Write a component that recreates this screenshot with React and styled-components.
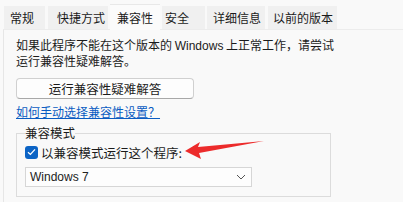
import React from 'react';
import styled, { createGlobalStyle } from 'styled-components';

const GlobalStyle = createGlobalStyle`
  html, body {
    margin: 0;
    padding: 0;
    background: #f9f9f9;
  }
  body {
    font-family: "Noto Sans CJK SC", "Noto Sans", sans-serif;
    font-size: 12px;
    color: #1b1b1b;
  }
`;

const Window = styled.div`
  width: 403px;
  height: 202px;
  overflow: hidden;
  position: relative;
  background: #f9f9f9;
`;

const TabStrip = styled.div`
  display: flex;
  align-items: flex-end;
  height: 29px;
  padding-left: 4px;
`;

const Tab = styled.div`
  width: ${p => p.w}px;
  margin-right: ${p => p.gap}px;
  height: ${p => (p.active ? '26px' : '23px')};
  padding-left: ${p => p.pad}px;
  display: flex;
  align-items: center;
  background: ${p => (p.active ? '#fbfbfb' : '#f0f0f0')};
  font-size: 12px;
  color: #1a1a1a;
  border-top: ${p => (p.active ? '1px solid #e8e8e8' : 'none')};
  box-sizing: border-box;
  margin-bottom: ${p => (p.active ? '-1px' : '0')};
  position: relative;
  z-index: ${p => (p.active ? 1 : 0)};
`;

const Panel = styled.div`
  margin-left: 3px;
  border-left: 1px solid #e6e6e6;
  border-top: 1px solid #ececec;
  background: #f9f9f9;
  height: 180px;
  padding: 8px 0 0 12px;
  box-sizing: border-box;
`;

const Para = styled.p`
  margin: 0;
  line-height: 14.5px;
  font-size: 12px;
  span.latin {
    font-family: "Liberation Sans", "Noto Sans", sans-serif;
  }
`;

const Button = styled.button`
  display: block;
  margin-top: 10px;
  width: 178px;
  height: 21px;
  border: 1px solid #d0d0d0;
  border-bottom-color: #a8a8a8;
  border-radius: 4px;
  background: #fdfdfd;
  font-family: inherit;
  font-size: 12.5px;
  color: #1b1b1b;
  padding: 0;
`;

const Link = styled.a`
  display: inline-block;
  margin-top: 6px;
  color: #0a5cc2;
  text-decoration: underline;
  font-size: 12px;
  line-height: 14px;
`;

const Group = styled.fieldset`
  margin: 6px 0 0 0;
  width: 315px;
  height: 71px;
  box-sizing: border-box;
  border: 1px solid #dcdcdc;
  border-radius: 0;
  padding: 0 0 0 8px;
`;

const Legend = styled.legend`
  padding: 0;
  font-size: 12.5px;
  line-height: 14px;
  color: #1b1b1b;
`;

const CheckRow = styled.label`
  display: flex;
  align-items: center;
  gap: 3px;
  height: 18px;
  margin-top: 3px;
  font-size: 12.5px;
`;

const CheckBox = styled.span`
  width: 13px;
  height: 13px;
  border-radius: 3px;
  background: #0c64c5;
  display: flex;
  align-items: center;
  justify-content: center;
`;

const Select = styled.div`
  margin-top: 6px;
  width: 227px;
  height: 20px;
  box-sizing: border-box;
  border: 1px solid #d6d6d6;
  background: #fdfdfd;
  display: flex;
  align-items: center;
  justify-content: space-between;
  padding: 0 5px 0 4px;
  font-family: "Liberation Sans", "Noto Sans", sans-serif;
  font-size: 12px;
  color: #222;
`;

const Arrow = styled.svg`
  position: absolute;
  left: 184px;
  top: 139px;
`;

const tabs = [
  { label: '常规', w: 41, pad: 6, gap: 3 },
  { label: '快捷方式', w: 60, pad: 9, gap: 2 },
  { label: '兼容性', w: 50, pad: 7, gap: 2, active: true },
  { label: '安全', w: 43, pad: 3, gap: 2 },
  { label: '详细信息', w: 58, pad: 6, gap: 3 },
  { label: '以前的版本', w: 69, pad: 5, gap: 0 },
];

export default function App() {
  return (
    <Window>
      <GlobalStyle />
      <TabStrip>
        {tabs.map(t => (
          <Tab key={t.label} active={t.active} w={t.w} pad={t.pad} gap={t.gap}>
            {t.label}
          </Tab>
        ))}
      </TabStrip>
      <Panel>
        <Para>
          如果此程序不能在这个版本的 <span className="latin">Windows</span> 上正常工作，请尝试
        </Para>
        <Para>运行兼容性疑难解答。</Para>
        <Button>运行兼容性疑难解答</Button>
        <Link>如何手动选择兼容性设置？</Link>
        <Group>
          <Legend>兼容模式</Legend>
          <CheckRow>
            <CheckBox>
              <svg width="9" height="8" viewBox="0 0 9 8">
                <path d="M1 4.2 L3.4 6.4 L8 1.4" fill="none" stroke="#fff" strokeWidth="1.3" />
              </svg>
            </CheckBox>
            以兼容模式运行这个程序:
          </CheckRow>
          <Select>
            <span>Windows 7</span>
            <svg width="10" height="6" viewBox="0 0 10 6">
              <path d="M1 1 L5 5 L9 1" fill="none" stroke="#555" strokeWidth="1" />
            </svg>
          </Select>
        </Group>
      </Panel>
      <Arrow width="84" height="22" viewBox="0 0 84 22">
        <path d="M1 12 L16 3 L14 8 L80 2 L15 14 L17 20 Z" fill="#ec2b2b" />
      </Arrow>
    </Window>
  );
}
